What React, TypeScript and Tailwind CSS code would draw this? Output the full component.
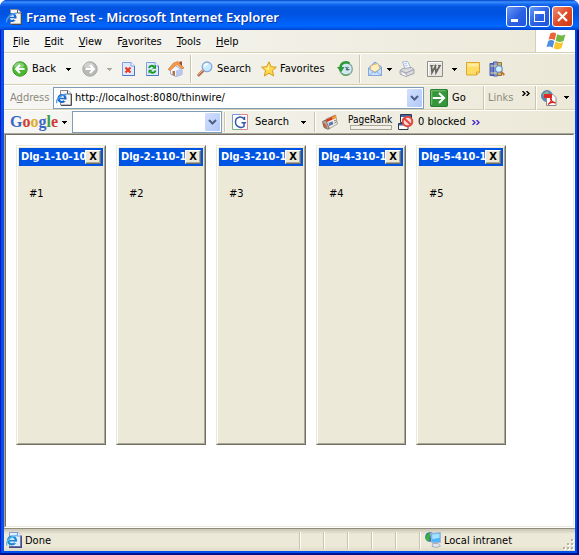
import React from "react";

type IconProps = { className?: string };

const font = "font-['DejaVu_Sans_Condensed','DejaVu_Sans',sans-serif]";

function Svg({ children, className = "size-4" }: { children: React.ReactNode; className?: string }) {
  return (
    <svg viewBox="0 0 16 16" className={`${className} shrink-0`} fill="none" aria-hidden="true">
      {children}
    </svg>
  );
}

function PageIcon({ className }: IconProps) {
  return (
    <Svg className={className}>
      <path d="M4.500.5h7.500l3 3v11.500H4.500z" fill="#f6f5f0" stroke="#8a8a90" />
      <path d="M11.500.5v3.500H15" fill="#fff" stroke="#55555c" />
      <path d="M15.500 4v11.500H5" stroke="#4a4a52" />
      <circle cx="6" cy="8.500" r="3.500" stroke="#1a66d0" strokeWidth="2.200" fill="#fff" />
      <path d="M3 8.600h6.500" stroke="#1a66d0" strokeWidth="1.500" />
      <path d="M8 9.500h3v1.700H8z" fill="#f6f5f0" />
      <path d="M1 13C-1 10.500 5 4.300 10.800 4.200" stroke="#4d9cee" strokeWidth="1.400" />
    </Svg>
  );
}

function StatusPageIcon() {
  return (
    <Svg>
      <path d="M3.500.5h8.500l2.500 3v11H3.500z" fill="#e4ecff" stroke="#8d9cd4" />
      <path d="M3 15.300h12.300V3.500" stroke="#454a86" strokeWidth="1.400" />
      <path d="M11.500.5V4H15" fill="#fff" stroke="#7f90cc" />
      <circle cx="6" cy="8.500" r="3.900" stroke="#1f86d2" strokeWidth="2.400" fill="#d8f2ff" />
      <path d="M3 8.700h7" stroke="#1f86d2" strokeWidth="1.600" />
      <path d="M8.500 9.700h3v1.700h-3z" fill="#e4ecff" />
      <path d="M1 13.500C-1 9.500 6 3 12 3.500" stroke="#5cc0ee" strokeWidth="1.400" />
    </Svg>
  );
}

function ArrowBall({ forward = false }: { forward?: boolean }) {
  const rim = forward ? "#a5a5a2" : "#3b9a24";
  const mid = forward ? "#b9b9b6" : "#4cb832";
  return (
    <Svg>
      <circle cx="8" cy="8" r="7.200" fill={mid} stroke={rim} />
      <ellipse cx="7" cy="4.500" rx="5" ry="3" fill="#fff" opacity=".35" />
      {forward ? (
        <path d="M3.500 8h8M8 4l4 4-4 4" stroke="#fff" strokeWidth="2" />
      ) : (
        <path d="M12.500 8h-8M8 4L4 8l4 4" stroke="#fff" strokeWidth="2" />
      )}
    </Svg>
  );
}

function StopIcon() {
  return (
    <Svg>
      <path d="M2.500 1.500h8.500l3.500 3.500v9.500h-12z" fill="#dfeaff" stroke="#7f9fe0" />
      <path d="M11 1.500V5h3.500" stroke="#7f9fe0" fill="#fff" />
      <path d="M14.500 5v9.500h-12" stroke="#4f75c8" />
      <path d="M5.500 6.500l5 5M10.500 6.500l-5 5" stroke="#ea3a1a" strokeWidth="2.200" />
    </Svg>
  );
}

function RefreshIcon() {
  return (
    <Svg>
      <path d="M2.500 1.500h8.500l3.500 3.500v9.500h-12z" fill="#dfeaff" stroke="#7f9fe0" />
      <path d="M11 1.500V5h3.500" stroke="#7f9fe0" fill="#fff" />
      <path d="M14.500 5v9.500h-12" stroke="#4f75c8" />
      <path d="M5 7c.5-2.300 3-3 5-1.200M11.500 9.500c-.5 2.300-3 3-5 1.200" stroke="#159a20" strokeWidth="1.900" />
      <path d="M12 3.800v4H8zM4.500 12.800v-4h4z" fill="#159a20" />
    </Svg>
  );
}

function HomeIcon() {
  return (
    <Svg>
      <path d="M2.500 8l4-4 7.500 5v4.500l-6 2-5.500-2.500z" fill="#f5f6fc" stroke="#8c9cc8" strokeWidth=".8" />
      <path d="M8 9.500l6-2v6l-6 2z" fill="#b9c8ee" />
      <path d="M0 8.500L5.500 2l4.500-1.500 6 6.500-2 1-5-4.500-7 6z" fill="#f39a4a" stroke="#d07c3c" strokeWidth=".7" />
      <path d="M11.500.500h2.500v4.500l-2.500-2.500z" fill="#a9472f" />
      <path d="M4.500 10H7v5l-2.500-1z" fill="#b8743a" />
    </Svg>
  );
}

function SearchIcon() {
  return (
    <Svg>
      <path d="M1.800 14L7 8.800" stroke="#b96f48" strokeWidth="3" strokeLinecap="round" />
      <path d="M1.500 13.500L6 9" stroke="#f0b58c" strokeLinecap="round" />
      <circle cx="10" cy="5.800" r="4.800" fill="#c8ecff" stroke="#8aa6dc" strokeWidth="1.300" />
      <path d="M7.500 5.800C7.500 3.800 9 2.800 11 3.100" stroke="#fff" strokeWidth="1.500" />
    </Svg>
  );
}

function StarIcon() {
  return (
    <Svg>
      <path d="M8 .8l2.100 4.900 5.300.5-4 3.500 1.300 5.300L8 12.200 3.300 15l1.300-5.300-4-3.500 5.300-.5z" fill="#ffda4c" stroke="#d79a1c" strokeLinejoin="round" />
      <path d="M8 3.500v6L4 7.200l2.700-.5z" fill="#fff3a6" />
    </Svg>
  );
}

function HistoryIcon() {
  return (
    <Svg>
      <circle cx="9" cy="8" r="6.300" fill="#d3e9ef" stroke="#8aa9a6" strokeWidth="1.400" />
      <path d="M8.500 6l3 3M11.500 6L9 8.800M9.500 9l3-.5" stroke="#476d80" strokeWidth="1.100" />
      <path d="M12.500 2.300C8 0 3.500 2 3.500 7" stroke="#2f9a3c" strokeWidth="2.400" />
      <path d="M0 6h7.500L4 11.500z" fill="#2f9a3c" />
      <path d="M5 12.500c2 2 5 2 7 .5" stroke="#58a85c" strokeWidth="1.500" />
    </Svg>
  );
}

function MailIcon() {
  return (
    <Svg>
      <path d="M1.500 7L8 1l6.500 5v8.500h-13z" fill="#9fc6f4" stroke="#7d9fd8" />
      <path d="M4 4.500l7-2 2 5.500-5 3-4.500-2z" fill="#fff0bc" stroke="#e0b66e" strokeWidth=".8" />
      <path d="M1.500 7.500l6.500 4.500 6.500-5v7.500h-13z" fill="#c9e2ff" stroke="#7d9fd8" strokeWidth=".8" />
      <path d="M2 14.500l4.500-4M14 14l-4.500-3.500" stroke="#7d9fd8" strokeWidth=".8" />
    </Svg>
  );
}

function PrinterIcon() {
  return (
    <Svg>
      <path d="M3.500.800l5-.3L12 7 6 8z" fill="#fff" stroke="#95a6cc" strokeWidth=".8" />
      <path d="M5 3l3-.4M5.700 5l3-.4" stroke="#8fb0e8" strokeWidth=".8" />
      <path d="M1 9.500L4 7.500l8.500-1 2.500 2v4L7 15.500l-6-2.500z" fill="#d9dade" stroke="#94969f" strokeWidth=".8" />
      <path d="M1 9.500l6 2.500 8-3.500M7 12v3" stroke="#94969f" strokeWidth=".8" />
      <path d="M3 12.500l4 1.800" stroke="#fff" strokeWidth="1.300" />
    </Svg>
  );
}

function WordIcon() {
  return (
    <Svg>
      <path d="M.5.500h15v15H.500z" fill="#e7e6e0" stroke="#8f8f88" />
      <path d="M1.500 14.500v-13h13" stroke="#fff" />
      <path d="M4.500 4.500l.5 7 3.300-6 .7 6 4-7" stroke="#66665f" strokeWidth="1.700" />
      <path d="M3 4.500h3.500M7.500 4.500h2M11 4.500h3" stroke="#66665f" />
    </Svg>
  );
}

function NoteIcon() {
  return (
    <Svg>
      <path d="M1.500 1.500h13v9.500l-3 3h-10z" fill="#ffdc63" stroke="#dfa52e" />
      <path d="M2.500 2.500h11v3h-11z" fill="#ffec9c" />
      <path d="M11.500 14v-3h3z" fill="#fff4c0" stroke="#dfa52e" />
    </Svg>
  );
}

function ResearchIcon() {
  return (
    <Svg>
      <path d="M1 2.500h3.500V14.500H1z" fill="#6a7cc8" stroke="#4c5aa4" />
      <path d="M4.500 1h4v14h-4z" fill="#8f9ce0" stroke="#4c5aa4" />
      <path d="M8.500 1.500h4V14.500h-4z" fill="#d4b468" stroke="#93743a" />
      <path d="M1.500 5h6.500M1.500 12h6.500" stroke="#e4dc8c" />
      <circle cx="9.800" cy="8" r="3.400" fill="#d0f2ff" stroke="#6d8fc2" strokeWidth="1.200" />
      <path d="M12 10.500l3.300 3.500" stroke="#bd762f" strokeWidth="2" />
    </Svg>
  );
}

function GoIcon() {
  return (
    <Svg className="size-[18px]">
      <rect x=".5" y=".5" width="15" height="15" rx="1" fill="#35973a" stroke="#2a7d31" />
      <path d="M1.500 14V1.500H14" stroke="#77c378" />
      <path d="M2.500 8h10M8 3.500L12.500 8 8 12.500" stroke="#fff" strokeWidth="1.800" />
    </Svg>
  );
}

function PdfIcon() {
  return (
    <Svg>
      <circle cx="6" cy="6" r="5.500" fill="#5b86b8" stroke="#6a86a4" />
      <path d="M2 4l4-3 2 2-3 3-2 1z" fill="#86b68c" />
      <path d="M5.500 4.500h6.500l3 3v8h-9.500z" fill="#fff" stroke="#8a8a8a" />
      <path d="M3 4h8v4H3z" fill="#de2b25" />
      <path d="M7 14.500c3-2 4-5 3-6s-1 3 4.500 4.500C12 12 9 12.500 7 14.500" stroke="#d8241d" strokeWidth="1.300" />
    </Svg>
  );
}

function GIcon() {
  return (
    <Svg>
      <path d="M.5.500h15v15H.500z" fill="#fff" />
      <path d="M.5 8V.5H8" stroke="#7c95d6" />
      <path d="M8 .5h7.500V8" stroke="#d88a8a" />
      <path d="M15.500 8v7.500H8" stroke="#d88a8a" />
      <path d="M8 15.500H.5V8" stroke="#6fb880" />
      <path d="M12.500 6V2.800M12.300 5.500C10 1.700 3.500 2.500 3.500 8s6.500 6.300 8.500 4.500V9M9.500 8.700h4.500" stroke="#3657a8" strokeWidth="1.500" />
    </Svg>
  );
}

function NewsIcon() {
  return (
    <Svg>
      <path d="M4 5l9.500-4 2 9-8 4.500-4.500-2z" fill="#efece4" stroke="#9a958c" strokeWidth=".8" />
      <path d="M4 5.500l9.500-4.200.6 2.500-9.500 4.400z" fill="#d5391e" />
      <path d="M10 3.200l4-1.700.5 2.300-4 1.800z" fill="#f0a02c" />
      <path d="M6.500 9l4-1.800.8 3-4 1.800z" fill="#5a78b5" />
      <path d="M12 7l2.500-1M12.400 9l2.500-1.200" stroke="#8c8880" />
      <path d="M.5 7.500l3-1.500 4 8.500-1.500.8-4-1.800z" fill="#b9a698" stroke="#6b5a50" strokeWidth=".8" />
      <path d="M1.500 9.500l3 4" stroke="#c5482a" strokeWidth="1.300" />
    </Svg>
  );
}

function BlockedIcon() {
  return (
    <Svg>
      <path d="M2.500.5h11v8h-11z" fill="#fff" stroke="#2d3446" />
      <path d="M3 1h10v2H3z" fill="#4267ae" />
      <path d="M.5 9.500h9.500v6H.500z" fill="#fff" stroke="#2d3446" />
      <path d="M1 10h8.500v1.500H1z" fill="#4267ae" />
      <circle cx="9.500" cy="7.500" r="4.800" fill="#fbd8d4" stroke="#e0463c" strokeWidth="2" />
      <path d="M6 4.300l7 6.500" stroke="#e0463c" strokeWidth="2" />
    </Svg>
  );
}

function IntranetIcon() {
  return (
    <Svg>
      <circle cx="5" cy="5" r="4.800" fill="#2468b8" />
      <path d="M.5 4L4 .5l3 1.500-2.500 3 .5 3.500-2 1L.5 7z" fill="#3fad3f" />
      <path d="M5.500 1.500L15.500.5v10L7 11z" fill="#4fb4fa" stroke="#a9b6cc" />
      <path d="M7 2.500l7.500-.8v4l-7 1.500z" fill="#a8e2ff" />
      <path d="M8 11.500h5l2.500 2.500-3.500 1.500-5-1z" fill="#dfe3ec" stroke="#9aa2b6" strokeWidth=".8" />
    </Svg>
  );
}

function WindowsFlag() {
  return (
    <svg viewBox="0 0 20 18" className="h-[18px] w-5" aria-hidden="true">
      <path d="M4.300 1.500Q7.500-.5 10.200 1.800L8.600 8.200Q5.500 6 2.500 7.800z" fill="#ed6437" />
      <path d="M11.200 2.300Q14.500 4.500 19.500 2.500L17.500 9Q13 11 9.600 8.800z" fill="#72b944" />
      <path d="M2.200 8.900Q5.400 7 8.300 9.200L6.600 15.700Q3.600 13.500.5 15.300z" fill="#4c8edb" />
      <path d="M9.300 9.800Q13 12 17.200 10L15.400 16.300Q11 18.500 7.700 16.300z" fill="#f8c62f" />
    </svg>
  );
}

function Caret({ className = "text-black" }: IconProps) {
  return (
    <svg viewBox="0 0 5 3" className={`h-[3px] w-[5px] shrink-0 ${className}`} shapeRendering="crispEdges" aria-hidden="true">
      <path d="M0 0h5v1H4v1H3v1H2V2H1V1H0z" fill="currentColor" />
    </svg>
  );
}

function Chevrons({ className = "text-black" }: IconProps) {
  return (
    <svg viewBox="0 0 8 5" className={`h-[5px] w-2 shrink-0 ${className}`} fill="none" aria-hidden="true">
      <path d="M.5 0L3 2.500.5 5M4.500 0L7 2.500 4.500 5" stroke="currentColor" strokeWidth="1.400" />
    </svg>
  );
}

function DropGlyph() {
  return (
    <span className="pointer-events-none flex w-[15px] shrink-0 items-center justify-center rounded-[1px] bg-linear-to-br from-[#d3e0ff] to-[#b0c8f7]">
      <svg viewBox="0 0 9 6" className="h-[6px] w-[9px]" fill="none" aria-hidden="true">
        <path d="M1 1l3.500 3.500L8 1" stroke="#4d6185" strokeWidth="2" />
      </svg>
    </span>
  );
}

function Separator({ className = "h-6" }: IconProps) {
  return <span className={`w-[2px] shrink-0 border-r border-l border-r-[#fffef8] border-l-[#c9c5b0] ${className}`} />;
}

function ToolButton({ label, children, className = "w-4" }: { label: string; children: React.ReactNode; className?: string }) {
  return (
    <button type="button" aria-label={label} className={`flex h-6 shrink-0 items-center justify-center ${className}`}>
      {children}
    </button>
  );
}

function TitleBar() {
  const base = "flex size-[21px] items-center justify-center rounded-[3px] border border-white";
  return (
    <header className="flex h-[30px] shrink-0 items-center bg-[linear-gradient(180deg,#0040c8_0px,#3a91ff_2px,#1a6cf2_4px,#0054df_7px,#0053e1_14px,#005ef4_21px,#0066ff_26px,#0057e8_28px,#0042cc_30px)] px-[6px] pt-[3px]">
      <PageIcon />
      <h1 className="ml-1 grow truncate font-['Noto_Sans',sans-serif] text-[13px] leading-4 font-semibold text-white [text-shadow:1px_1px_0_#0a2f9c]">
        Frame Test - Microsoft Internet Explorer
      </h1>
      <div className="flex gap-[2px]">
        <button type="button" aria-label="Minimize" className={`${base} bg-linear-to-br from-[#6a97f5] via-[#2d62e4] to-[#1e55dc]`}>
          <svg viewBox="0 0 19 19" className="size-[19px]" aria-hidden="true"><path d="M4 12h7v3H4z" fill="#fff" /></svg>
        </button>
        <button type="button" aria-label="Maximize" className={`${base} bg-linear-to-br from-[#6a97f5] via-[#2d62e4] to-[#1e55dc]`}>
          <svg viewBox="0 0 19 19" className="size-[19px]" aria-hidden="true"><path d="M4 4h11v11H4zM5 7v7h9V7z" fill="#fff" fillRule="evenodd" /></svg>
        </button>
        <button type="button" aria-label="Close" className={`${base} bg-linear-to-br from-[#ee8a6e] via-[#df4c28] to-[#cc3a12]`}>
          <svg viewBox="0 0 19 19" className="size-[19px]" aria-hidden="true"><path d="M5 5l9 9M14 5l-9 9" stroke="#fff" strokeWidth="2.200" /></svg>
        </button>
      </div>
    </header>
  );
}

const menus = [
  ["", "F", "ile"],
  ["", "E", "dit"],
  ["", "V", "iew"],
  ["F", "a", "vorites"],
  ["", "T", "ools"],
  ["", "H", "elp"],
];

function MenuBar() {
  return (
    <div className="flex h-[23px] shrink-0 border-b border-[#d5cfb4]">
      <nav className="flex grow items-center gap-[15px] pt-px pl-[9px]">
        {menus.map(([before, key, after]) => (
          <button type="button" key={key + after}>
            {before}<u className="underline-offset-1">{key}</u>{after}
          </button>
        ))}
      </nav>
      <div className="flex w-10 items-center justify-center border-l border-[#d5cfb4] bg-white">
        <WindowsFlag />
      </div>
    </div>
  );
}

function Toolbar() {
  return (
    <div className="flex h-8 shrink-0 items-center border-t border-b border-t-white border-b-[#d5cfb4] pl-2">
      <ToolButton label="Back" className="w-[50px] justify-start! gap-1"><ArrowBall />Back</ToolButton>
      <ToolButton label="Back history" className="w-3"><Caret /></ToolButton>
      <ToolButton label="Forward" className="ml-2 w-4"><ArrowBall forward /></ToolButton>
      <ToolButton label="Forward history" className="w-[22px]"><Caret className="text-[#aca899]" /></ToolButton>
      <div className="flex gap-2">
        <ToolButton label="Stop"><StopIcon /></ToolButton>
        <ToolButton label="Refresh"><RefreshIcon /></ToolButton>
        <ToolButton label="Home"><HomeIcon /></ToolButton>
      </div>
      <Separator className="ml-[6px] h-7" />
      <ToolButton label="Search" className="ml-[5px] w-16 justify-start! gap-1"><SearchIcon />Search</ToolButton>
      <ToolButton label="Favorites" className="w-[72px] justify-start! gap-[3px]"><StarIcon />Favorites</ToolButton>
      <ToolButton label="History" className="ml-1"><HistoryIcon /></ToolButton>
      <Separator className="ml-[6px] h-7" />
      <ToolButton label="Mail" className="ml-[6px] w-4"><MailIcon /></ToolButton>
      <ToolButton label="Mail options" className="w-3"><Caret /></ToolButton>
      <ToolButton label="Print" className="ml-1"><PrinterIcon /></ToolButton>
      <ToolButton label="Edit with Word" className="ml-3"><WordIcon /></ToolButton>
      <ToolButton label="Edit options" className="w-[22px]"><Caret /></ToolButton>
      <ToolButton label="Discuss"><NoteIcon /></ToolButton>
      <ToolButton label="Research" className="ml-2"><ResearchIcon /></ToolButton>
    </div>
  );
}

function AddressBar() {
  return (
    <div className="flex h-[25px] shrink-0 items-center border-t border-b border-t-white border-b-[#d5cfb4] pl-[6px]">
      <label htmlFor="address" className="w-[43px] shrink-0 text-[#8d8a7c]">
        A<u className="underline-offset-1">d</u>dress
      </label>
      <div className="flex h-[22px] min-w-0 grow items-stretch border border-[#7f9db9] bg-white p-px">
        <span className="flex items-center pl-px"><PageIcon /></span>
        <input id="address" defaultValue="http://localhost:8080/thinwire/" className="ml-[3px] min-w-0 grow outline-none" />
        <DropGlyph />
      </div>
      <button type="button" className="ml-[6px] flex w-[53px] shrink-0 items-center gap-1"><GoIcon />Go</button>
      <Separator />
      <span className="ml-[3px] w-8 shrink-0 text-[#8d8a7c]">Links</span>
      <ToolButton label="More links" className="w-3 pb-2"><Chevrons /></ToolButton>
      <Separator className="ml-[3px] h-6" />
      <ToolButton label="Convert to PDF" className="ml-1"><PdfIcon /></ToolButton>
      <ToolButton label="PDF options" className="w-[18px]"><Caret /></ToolButton>
    </div>
  );
}

function GoogleBar() {
  return (
    <div className="flex h-[23px] shrink-0 items-center border-t border-white pl-[6px]">
      <button type="button" className="flex w-[62px] shrink-0 items-center gap-1">
        <span className="font-['Liberation_Serif',serif] text-[16px] leading-5 font-bold">
          <span className="text-[#3a66c8]">G</span>
          <span className="text-[#d23a36]">o</span>
          <span className="text-[#dcae2c]">o</span>
          <span className="text-[#3a66c8]">g</span>
          <span className="text-[#3aa04a]">l</span>
          <span className="text-[#d23a36]">e</span>
        </span>
        <Caret />
      </button>
      <div className="flex h-[22px] w-[150px] shrink-0 items-stretch border border-[#7f9db9] bg-white p-px">
        <input aria-label="Google search" className="min-w-0 grow outline-none" />
        <DropGlyph />
      </div>
      <Separator className="ml-[2px] h-5" />
      <button type="button" className="ml-[6px] flex w-16 shrink-0 items-center gap-[7px]"><GIcon />Search</button>
      <ToolButton label="Search options" className="w-[14px]"><Caret /></ToolButton>
      <Separator className="ml-1 h-5" />
      <ToolButton label="News" className="ml-[6px]"><NewsIcon /></ToolButton>
      <div className="ml-[10px] flex w-[50px] shrink-0 flex-col text-[10px] leading-[10px]">
        PageRank
        <span className="ml-[2px] h-[5px] w-[42px] border border-[#aca899] bg-[#f2f0e6]" />
      </div>
      <button type="button" className="flex w-[70px] shrink-0 items-center gap-1 whitespace-nowrap"><BlockedIcon />0 blocked</button>
      <ToolButton label="More"><Chevrons className="text-[#4a2bd0]" /></ToolButton>
    </div>
  );
}

function Dialog({ title, label }: { title: string; label: string }) {
  return (
    <section className="h-[300px] w-[90px] shrink-0 border border-t-[#ece9d8] border-r-[#716f64] border-b-[#716f64] border-l-[#ece9d8]">
      <div className="h-full border border-t-white border-r-[#aca899] border-b-[#aca899] border-l-white bg-[#ece9d8] p-px">
        <div className="flex h-[18px] items-center bg-[#0054e3] px-[2px]">
          <h2 className="min-w-0 grow overflow-hidden font-bold whitespace-nowrap text-white">{title}</h2>
          <button
            type="button"
            aria-label="Close dialog"
            className="flex h-[14px] w-4 shrink-0 items-center justify-center border border-t-white border-r-[#716f64] border-b-[#716f64] border-l-white bg-[#ece9d8] font-bold shadow-[inset_-1px_-1px_0_#aca899]"
          >
            X
          </button>
        </div>
        <p className="pt-[21px] pl-[10px]">{label}</p>
      </div>
    </section>
  );
}

const dialogs = [
  { title: "Dlg-1-10-10", label: "#1" },
  { title: "Dlg-2-110-10", label: "#2" },
  { title: "Dlg-3-210-10", label: "#3" },
  { title: "Dlg-4-310-10", label: "#4" },
  { title: "Dlg-5-410-10", label: "#5" },
];

function StatusBar() {
  return (
    <footer className="flex h-[23px] shrink-0 items-center border-t border-[#8f8c7c] bg-[linear-gradient(180deg,#c9c5b4_0px,#ece9d8_5px,#ece9d8_17px,#dedac6_22px)] pl-[2px]">
      <StatusPageIcon />
      <span className="ml-[3px] grow pt-px">Done</span>
      <div className="flex shrink-0">
        {[0, 1, 2, 3, 4].map((pane) => (
          <span key={pane} className="flex w-6"><Separator className="h-[17px]" /></span>
        ))}
        <Separator className="h-[17px]" />
      </div>
      <div className="ml-1 flex w-[138px] shrink-0 items-center gap-[3px]">
        <IntranetIcon />
        <span className="pt-px">Local intranet</span>
      </div>
      <svg viewBox="0 0 12 12" className="size-3 shrink-0 self-end" shapeRendering="crispEdges" aria-hidden="true">
        <path d="M9 1h2v2H9zM5 5h2v2H5zM9 5h2v2H9zM1 9h2v2H1zM5 9h2v2H5zM9 9h2v2H9z" fill="#fff" />
        <path d="M8 0h2v2H8zM4 4h2v2H4zM8 4h2v2H8zM0 8h2v2H0zM4 8h2v2H4zM8 8h2v2H8z" fill="#b8b4a2" />
      </svg>
    </footer>
  );
}

export default function App() {
  return (
    <div className={`flex h-screen flex-col overflow-hidden rounded-t-[7px] bg-[#0046e0] text-[11px] leading-[14px] text-black ${font}`}>
      <TitleBar />
      <div className="flex min-h-0 grow flex-col border-r-2 border-b-2 border-l border-r-[#00138c] border-b-[#00138c] border-l-[#0019cf]">
        <div className="flex min-h-0 grow flex-col border-r-2 border-b-2 border-l-[3px] border-r-[#0046e8] border-b-[#0050ee] border-l-[#0a4ee8]">
          <div className="flex shrink-0 flex-col bg-linear-to-r from-[#f6f6f4] to-[#ece9d8]">
            <MenuBar />
            <Toolbar />
            <AddressBar />
            <GoogleBar />
          </div>
          <div className="flex min-h-0 grow flex-col border border-t-[#aca899] border-r-white border-b-white border-l-[#aca899]">
            <main className="flex min-h-0 grow gap-[10px] overflow-hidden border border-t-[#716f64] border-r-[#ece9d8] border-b-[#ece9d8] border-l-[#716f64] bg-white p-[10px]">
              {dialogs.map((dialog) => (
                <Dialog key={dialog.label} {...dialog} />
              ))}
            </main>
          </div>
          <StatusBar />
        </div>
      </div>
    </div>
  );
}
